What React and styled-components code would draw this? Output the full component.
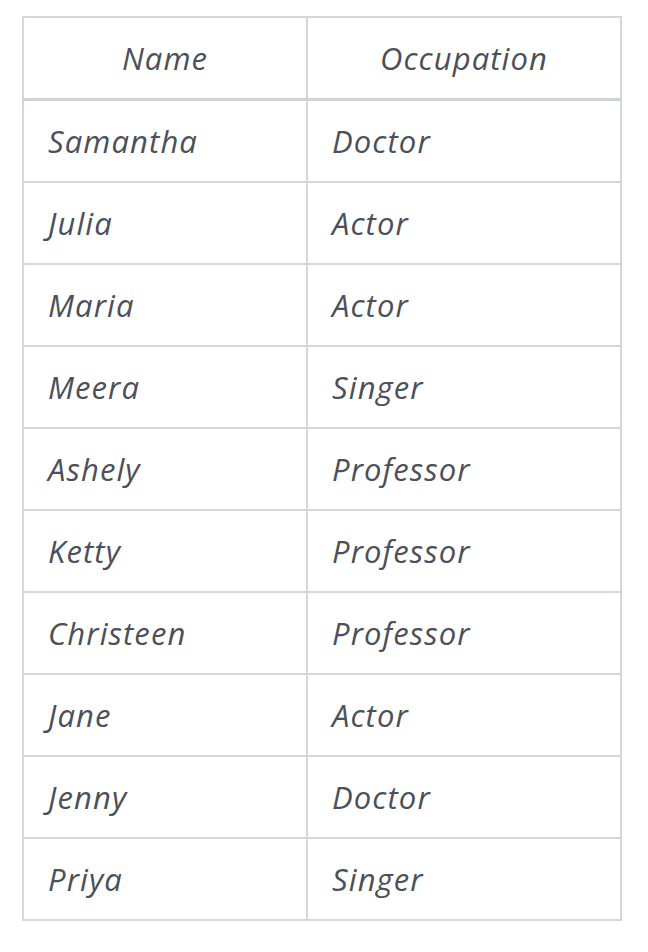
import React from 'react'
import styled, { createGlobalStyle } from 'styled-components'

const GlobalStyle = createGlobalStyle`
  body {
    margin: 0;
    background: #ffffff;
    font-family: "Open Sans", "Liberation Sans", sans-serif;
  }
`

const Page = styled.div`
  padding: 16px 0 0 22px;
`

const Table = styled.table`
  border-collapse: collapse;
  width: 600px;
  border: 2px solid #d6d7de;
  font-family: "Open Sans", "Liberation Sans", sans-serif;
  font-style: italic;
  font-size: 31px;
  color: #4b5059;
`

const HeadCell = styled.th`
  font-weight: 400;
  text-align: center;
  height: 80px;
  padding: 0;
  width: ${p => p.$w};
  border-left: 2px solid #d6d7de;
  border-bottom: 3px solid #d0d2d9;
  letter-spacing: 1.1px;
`

const Cell = styled.td`
  height: 80px;
  padding: 0 0 0 ${p => p.$pad}px;
  border-left: 2px solid #d6d7de;
  border-top: 2px solid #d6d7de;
  letter-spacing: 1.1px;
`

const people = [
  ['Samantha', 'Doctor'],
  ['Julia', 'Actor'],
  ['Maria', 'Actor'],
  ['Meera', 'Singer'],
  ['Ashely', 'Professor'],
  ['Ketty', 'Professor'],
  ['Christeen', 'Professor'],
  ['Jane', 'Actor'],
  ['Jenny', 'Doctor'],
  ['Priya', 'Singer'],
]

function App() {
  return (
    <Page>
      <GlobalStyle />
      <Table>
        <thead>
          <tr>
            <HeadCell $w="282px">Name</HeadCell>
            <HeadCell>Occupation</HeadCell>
          </tr>
        </thead>
        <tbody>
          {people.map((p, i) => (
            <tr key={i}>
              <Cell $pad={24}>{p[0]}</Cell>
              <Cell $pad={24}>{p[1]}</Cell>
            </tr>
          ))}
        </tbody>
      </Table>
    </Page>
  )
}

export default App
